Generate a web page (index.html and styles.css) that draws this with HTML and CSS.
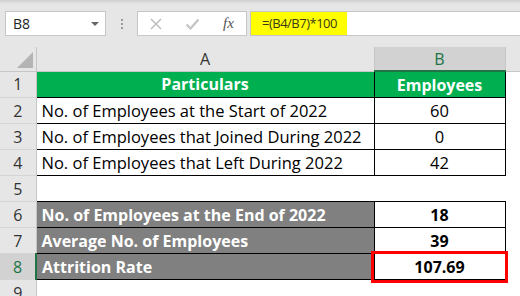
FILE: index.html
```html
<!DOCTYPE html>
<html lang="en">
<head>
  <meta charset="UTF-8" />
  <title>Attrition Rate</title>
  <link rel="stylesheet" href="styles.css">
</head>
<body>

<div class="toolbar">
  <div class="name-box">
    <span>B8</span>
    <span class="caret"></span>
  </div>
  <div class="grip"><i></i><i></i><i></i></div>
  <div class="fx-box">
    <svg class="icon" width="12" height="12" viewBox="0 0 12 12">
      <path d="M1 1 L11 11 M11 1 L1 11" stroke="#b8b8b8" stroke-width="1.3" fill="none"/>
    </svg>
    <svg class="icon" width="15" height="12" viewBox="0 0 15 12">
      <path d="M1.5 6.5 L5.5 10.5 L13.5 1.5" stroke="#c4c4c4" stroke-width="2.2" fill="none"/>
    </svg>
    <span class="fx">fx</span>
  </div>
  <div class="formula">
    <span class="hl">=(B4/B7)*100</span>
  </div>
</div>

<table class="sheet">
  <colgroup>
    <col class="c-head">
    <col class="c-a">
    <col class="c-b">
    <col>
  </colgroup>
  <tr class="col-heads">
    <th class="corner"><span class="tri"></span></th>
    <th>A</th>
    <th class="sel">B</th>
    <th class="blank"></th>
  </tr>
  <tr>
    <th class="rh">1</th>
    <td class="green">Particulars</td>
    <td class="green">Employees</td>
    <td class="empty"></td>
  </tr>
  <tr>
    <th class="rh">2</th>
    <td class="txt">No. of Employees at the Start of 2022</td>
    <td class="num">60</td>
    <td class="empty"></td>
  </tr>
  <tr>
    <th class="rh">3</th>
    <td class="txt">No. of Employees that Joined During 2022</td>
    <td class="num">0</td>
    <td class="empty"></td>
  </tr>
  <tr>
    <th class="rh">4</th>
    <td class="txt">No. of Employees that Left During 2022</td>
    <td class="num">42</td>
    <td class="empty"></td>
  </tr>
  <tr class="gap">
    <th class="rh">5</th>
    <td class="empty"></td>
    <td class="empty"></td>
    <td class="empty"></td>
  </tr>
  <tr>
    <th class="rh">6</th>
    <td class="grey">No. of Employees at the End of 2022</td>
    <td class="num bold">18</td>
    <td class="empty"></td>
  </tr>
  <tr>
    <th class="rh">7</th>
    <td class="grey">Average No. of Employees</td>
    <td class="num bold">39</td>
    <td class="empty"></td>
  </tr>
  <tr>
    <th class="rh sel">8</th>
    <td class="grey">Attrition Rate</td>
    <td class="num bold active">107.69</td>
    <td class="empty"></td>
  </tr>
  <tr>
    <th class="rh">9</th>
    <td class="empty"></td>
    <td class="empty"></td>
    <td class="empty"></td>
  </tr>
</table>

</body>
</html>
```

FILE: styles.css
```css
body {
  margin: 0;
  width: 520px;
  height: 296px;
  overflow: hidden;
  background: #fff;
  font-family: 'Open Sans', 'Liberation Sans', sans-serif;
}

/* formula bar */
.toolbar {
  height: 47px;
  box-sizing: border-box;
  padding-top: 11px;
  display: flex;
  align-items: flex-start;
  background: linear-gradient(#cfcfcf 0, #e6e6e6 4px, #e6e6e6 100%);
}
.name-box {
  margin-left: 5px;
  width: 101px;
  height: 25px;
  box-sizing: border-box;
  border: 1px solid #c6c6c6;
  background: #fff;
  display: flex;
  align-items: center;
  justify-content: space-between;
  padding: 0 6px 0 7px;
  font-size: 14px;
  color: #222;
}
.caret {
  width: 0;
  height: 0;
  border-left: 4px solid transparent;
  border-right: 4px solid transparent;
  border-top: 4px solid #666;
}
.grip {
  width: 31px;
  height: 25px;
  display: flex;
  flex-direction: column;
  align-items: center;
  justify-content: center;
  gap: 2px;
}
.grip i {
  width: 2px;
  height: 2px;
  background: #9a9a9a;
}
.fx-box {
  width: 110px;
  height: 25px;
  box-sizing: border-box;
  border: 1px solid #c6c6c6;
  background: #fff;
  display: flex;
  align-items: center;
  padding-left: 12px;
  gap: 23px;
}
.fx {
  margin-left: 0;
  font-family: 'Liberation Serif', serif;
  font-style: italic;
  font-size: 15px;
  color: #555;
}
.formula {
  margin-left: 3px;
  flex: 1;
  height: 25px;
  box-sizing: border-box;
  border: 1px solid #c6c6c6;
  border-right: none;
  background: #fff;
  display: flex;
}
.hl {
  background: #ffff00;
  padding: 0 10px 0 11px;
  line-height: 23px;
  font-size: 13px;
  letter-spacing: -0.5px;
  color: #3a3a1a;
}

/* grid */
.sheet {
  border-collapse: collapse;
  table-layout: fixed;
  width: 520px;
  font-size: 16.5px;
}
.c-head { width: 36px; }
.c-a { width: 338px; }
.c-b { width: 131px; }

.sheet th,
.sheet td {
  padding: 0;
  height: 25px;
  white-space: nowrap;
  overflow: hidden;
}
.col-heads th {
  height: 23px;
  background: #e6e6e6;
  font-weight: normal;
  font-size: 16px;
  color: #333;
  border-right: 1px solid #c6c6c6;
  border-bottom: 1px solid #c6c6c6;
}
.col-heads th.sel {
  background: #d2d2d2;
  color: #217346;
  border-bottom: 2px solid #217346;
}
.col-heads th.blank {
  border-right: none;
}
.corner {
  position: relative;
}
.tri {
  position: absolute;
  right: 3px;
  bottom: 3px;
  width: 0;
  height: 0;
  border-left: 16px solid transparent;
  border-bottom: 16px solid #b4b4b4;
}
.rh {
  background: #e6e6e6;
  font-weight: normal;
  font-size: 16px;
  color: #333;
  border-right: 1px solid #c6c6c6;
  border-bottom: 1px solid #d4d4d4;
}
.rh.sel {
  background: #d2d2d2;
  color: #217346;
  border-right: 2px solid #217346;
}

.green,
.txt,
.grey,
.num {
  border: 1px solid #000;
}
.green {
  background: #00b050;
  color: #fff;
  font-weight: bold;
  font-size: 16px;
  text-align: center;
}
.txt {
  padding-left: 5px !important;
  color: #000;
}
.grey {
  background: #808080;
  color: #fff;
  font-weight: bold;
  font-size: 16px;
  padding-left: 5px !important;
}
.num {
  text-align: center;
  color: #000;
}
.bold {
  font-weight: bold;
  font-size: 16px;
}
.active {
  outline: 3px solid #ff0000;
  outline-offset: 0;
}
.empty {
  background: #fff;
}
```
